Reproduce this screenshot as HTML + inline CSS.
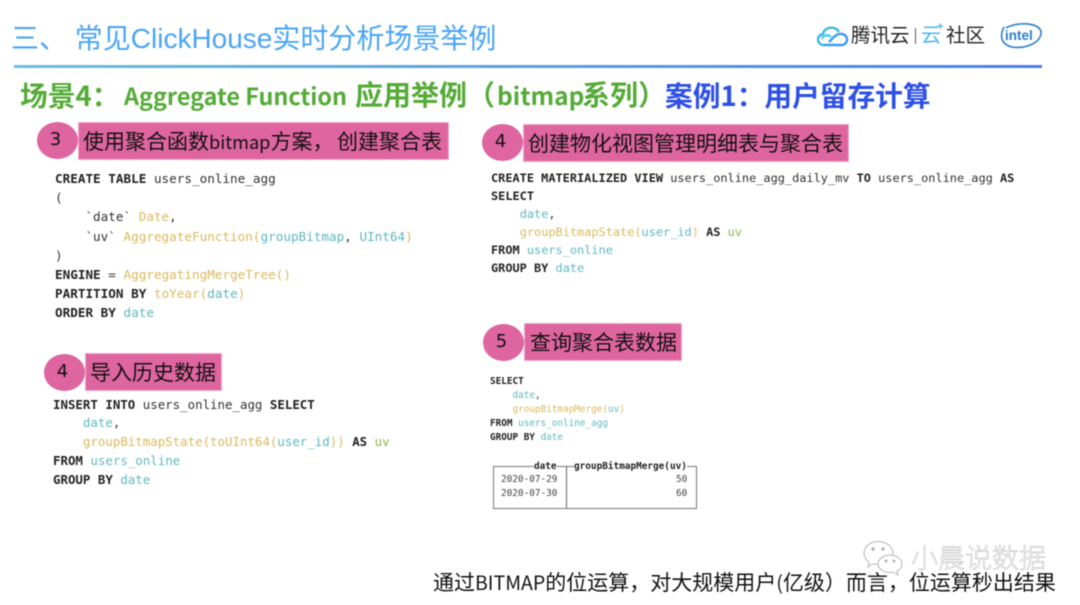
<!DOCTYPE html>
<html><head><meta charset="utf-8">
<style>
html,body{margin:0;padding:0;background:#fff}
#p{position:relative;width:1080px;height:605px;overflow:hidden;background:#fff;filter:blur(.45px);font-family:"Liberation Sans","Noto Sans CJK SC",sans-serif}
.a{position:absolute;white-space:pre}
.pk{position:absolute;background:#de659f;border:1px solid #eea9c9;box-sizing:border-box}
.c{position:absolute;background:#de659f;border-radius:50%;color:#111;text-align:center;font-size:18px;font-family:"DejaVu Sans",sans-serif;box-sizing:border-box;padding-right:4px}
.l{position:absolute;white-space:pre;color:#111;font-size:21px;line-height:28px;font-family:"Noto Sans CJK SC",sans-serif}
.l i{font-style:normal;font-size:18.2px}
.code{position:absolute;white-space:pre;font-family:"DejaVu Sans Mono",monospace;color:#333}
.code b{color:#222;font-weight:700}
.y{color:#dcb95c}.t{color:#5fb8c4}.g{color:#8db556}
.h{position:absolute;white-space:pre;line-height:38px;font-weight:700;font-family:"Noto Sans CJK SC",sans-serif;top:75px;font-size:28px;color:#55ab37}
.h i{font-style:normal;font-size:23.400px}
</style></head><body><div id="p">
<div class="a" style="left:11px;top:20px;font-size:28px;line-height:38px;color:#4aa5f5">三、 常见ClickHouse实时分析场景举例</div>
<div class="a" style="left:14px;top:65px;width:1028px;height:3px;background:linear-gradient(90deg,#69c0d8,#4a80ea)"></div>
<svg class="a" style="left:817px;top:24px" width="32" height="24" viewBox="0 0 32 24" fill="none" stroke-width="2.4"><path d="M7 21a5.500 5.500 0 0 1-1-11c1-7 12-9 16-2" stroke="#3cb4ea"/><path d="M7 21h17a5.500 5.500 0 0 0 1-11c-5-1-8 3-11 6l-2 2" stroke="#3c9bf0"/><path d="M14 13c-3-3-8-2-9 2" stroke="#49d0e0"/></svg>
<div class="a" style="left:851px;top:22px;font-size:19.500px;line-height:28px;color:#222">腾讯云</div>
<div class="a" style="left:915px;top:28px;width:1px;height:16px;background:#555"></div>
<div class="a" style="left:921px;top:22px;font-size:20px;line-height:28px;color:#47b7f0">云</div>
<div class="a" style="left:937px;top:21px;font-size:11px;line-height:12px;color:#47b7f0;font-weight:700">+</div>
<div class="a" style="left:946px;top:22px;font-size:19.500px;line-height:28px;color:#222">社区</div>
<svg class="a" style="left:998px;top:21px" width="46" height="30" viewBox="0 0 46 30"><path d="M6 6C2 14 2 23 14 26c12 2 27-3 29-13C44 5 33 2 22 3 16 3.500 11 5 8 7" fill="none" stroke="#2b7fc8" stroke-width="1.600"/><text x="7" y="19" font-family="Liberation Sans" font-size="13.500" font-weight="700" fill="#2b7fc8">intel</text></svg>

<div class="h" style="left:20px;font-size:27.7px">场景4：</div>
<div class="h" style="left:124px"><i>Aggregate Function</i></div>
<div class="h" style="left:355px">应用举例（</div>
<div class="h" style="left:497px"><i style="font-size:24.500px">bitmap</i></div>
<div class="h" style="left:582px">系列）</div>
<div class="h" style="left:665px;color:#2d50e6;font-size:27.7px">案例1：用户留存计算</div>

<div class="c" style="left:37px;top:122px;width:41px;height:37px;line-height:35px">3</div>
<div class="pk" style="left:78px;top:122px;width:371px;height:38px"></div>
<div class="l" style="left:83px;top:127px">使用聚合函数<i>bitmap</i>方案，</div>
<div class="l" style="left:337px;top:127px">创建聚合表</div>
<div class="c" style="left:482px;top:124px;width:41px;height:37px;line-height:35px">4</div>
<div class="pk" style="left:523px;top:124px;width:326px;height:38px"></div>
<div class="l" style="left:528px;top:129px">创建物化视图管理明细表与聚合表</div>
<div class="c" style="left:44px;top:354px;width:41px;height:37px;line-height:35px">4</div>
<div class="pk" style="left:85px;top:353px;width:137px;height:38px"></div>
<div class="l" style="left:90px;top:358px">导入历史数据</div>
<div class="c" style="left:483px;top:324px;width:41px;height:37px;line-height:35px">5</div>
<div class="pk" style="left:524px;top:323px;width:158px;height:38px"></div>
<div class="l" style="left:530px;top:328px">查询聚合表数据</div>

<div class="code" style="left:55px;top:169px;font-size:12.650px;line-height:19.200px"><b>CREATE TABLE</b> users_online_agg
(
    `date` <span class="y">Date</span>,
    `uv` <span class="y">AggregateFunction(</span><span class="t">groupBitmap</span>, <span class="t">UInt64</span><span class="y">)</span>
)
<b>ENGINE</b> = <span class="y">AggregatingMergeTree()</span>
<b>PARTITION BY</b> <span class="y">toYear(</span><span class="t">date</span><span class="y">)</span>
<b>ORDER BY</b> <span class="t">date</span></div>

<div class="code" style="left:53px;top:395.500px;font-size:12.430px;line-height:18.800px"><b>INSERT INTO</b> users_online_agg <b>SELECT</b>
    <span class="t">date</span>,
    <span class="y">groupBitmapState(toUInt64(</span><span class="t">user_id</span><span class="y">))</span> <b>AS</b> <span class="g">uv</span>
<b>FROM</b> <span class="t">users_online</span>
<b>GROUP BY</b> <span class="t">date</span></div>

<div class="code" style="left:491px;top:169px;font-size:11.920px;line-height:18px"><b>CREATE MATERIALIZED VIEW</b> users_online_agg_daily_mv <b>TO</b> users_online_agg <b>AS</b>
<b>SELECT</b>
    <span class="t">date</span>,
    <span class="y">groupBitmapState(</span><span class="t">user_id</span><span class="y">)</span> <b>AS</b> <span class="g">uv</span>
<b>FROM</b> <span class="t">users_online</span>
<b>GROUP BY</b> <span class="t">date</span></div>

<div class="code" style="left:490px;top:375px;font-size:9.330px;line-height:14px"><b>SELECT</b>
    <span class="t">date</span>,
    <span class="y">groupBitmapMerge(</span><span class="t">uv</span><span class="y">)</span>
<b>FROM</b> <span class="t">users_online_agg</span>
<b>GROUP BY</b> <span class="t">date</span></div>

<div class="a" style="left:492.500px;top:466px;width:204px;height:43px;border:1.300px solid #777;box-sizing:border-box"></div>
<div class="a" style="left:565.500px;top:466px;width:1.300px;height:43px;background:#666"></div>
<div class="code" style="left:534px;top:460px;font-size:9.400px;line-height:13px;background:#fff;color:#222;font-weight:700">date</div>
<div class="code" style="left:574px;top:460px;font-size:9.400px;line-height:13px;background:#fff;color:#222;font-weight:700">groupBitmapMerge(uv)</div>
<div class="code" style="left:501px;top:473px;font-size:9.400px;line-height:14px;color:#444">2020-07-29
2020-07-30</div>
<div class="code" style="left:676px;top:473px;font-size:9.400px;line-height:14px;color:#444">50
60</div>

<svg class="a" style="left:862px;top:540px" width="46" height="36" viewBox="0 0 46 36" fill="#fff" stroke="#b5b5b5" stroke-width="1"><path d="M2 13C2 6 9 1.500 16 1.500S31 6 31 13c0 2-.5 3-1 4-6-3-14 1-14 7-2 1-5 0-6 0l-4 3 1-5C4 20 2 17 2 13z"/><path d="M16 24c0-5 6-9 12-9s12 4 12 9c0 3-2 6-5 7l1 4-5-3c-8 2-15-3-15-8z"/><circle cx="11" cy="9" r="1.200" fill="#aaa"/><circle cx="21" cy="9" r="1.200" fill="#aaa"/><circle cx="24" cy="21" r="1" fill="#aaa"/><circle cx="32" cy="21" r="1" fill="#aaa"/></svg>
<div class="a" style="left:911px;top:539px;font-size:27px;line-height:36px;color:#fff;-webkit-text-stroke:.4px #aaa;font-weight:300;font-family:'Noto Sans CJK SC',sans-serif">小晨说数据</div>
<div class="a" style="left:433px;top:568px;font-size:21px;line-height:28px;color:#111;font-family:'Noto Sans CJK SC',sans-serif">通过<span style="font-size:19.500px">BITMAP</span>的位运算，对大规模用户<span style="font-size:19.500px">(</span>亿级）而言，位运算秒出结果</div>
</div></body></html>
